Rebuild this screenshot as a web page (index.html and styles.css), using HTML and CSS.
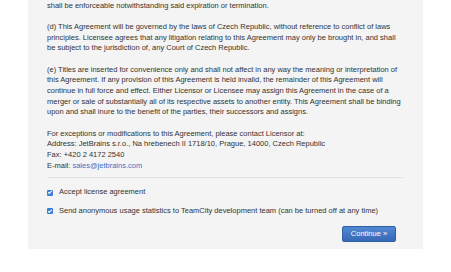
FILE: index.html
```html
<!DOCTYPE html>
<html lang="en">
  <head>
    <meta charset="UTF-8" />
    <title>TeamCity License Agreement</title>
    <link rel="stylesheet" href="styles.css">
  </head>
  <body>
    <main class="panel">
      <div class="agreement">
        <p>shall be enforceable notwithstanding said expiration or termination.</p>
        <p>
          (d) This Agreement will be governed by the laws of Czech Republic, without reference to conflict of laws
          principles. Licensee agrees that any litigation relating to this Agreement may only be brought in, and shall
          be subject to the jurisdiction of, any Court of Czech Republic.
        </p>
        <p>
          (e) Titles are inserted for convenience only and shall not affect in any way the meaning or interpretation of
          this Agreement. If any provision of this Agreement is held invalid, the remainder of this Agreement will
          continue in full force and effect. Either Licensor or Licensee may assign this Agreement in the case of a
          merger or sale of substantially all of its respective assets to another entity. This Agreement shall be binding
          upon and shall inure to the benefit of the parties, their successors and assigns.
        </p>
        <p>
          For exceptions or modifications to this Agreement, please contact Licensor at:<br />
          Address: JetBrains s.r.o., Na hrebenech II 1718/10, Prague, 14000, Czech Republic<br />
          Fax: +420 2 4172 2540<br />
          E-mail: <a href="mailto:sales@jetbrains.com">sales@jetbrains.com</a>
        </p>
      </div>

      <hr />

      <form class="accept">
        <label class="check">
          <input type="checkbox" checked />
          <span>Accept license agreement</span>
        </label>
        <label class="check">
          <input type="checkbox" checked />
          <span>Send anonymous usage statistics to TeamCity development team (can be turned off at any time)</span>
        </label>
        <div class="actions">
          <button type="button">Continue &raquo;</button>
        </div>
      </form>
    </main>
  </body>
</html>
```

FILE: styles.css
```css
body {
  margin: 0;
  background: #fff;
  font-family: "Liberation Sans", Arial, sans-serif;
  font-size: 7.5px;
  line-height: 10.67px;
  color: #333;
}

.panel {
  width: 395px;
  margin: 0 auto;
  padding: 0 19px 7px 19px;
  box-sizing: border-box;
  background: #f4f4f4;
}

.agreement {
  padding-top: 0.5px;
}

.agreement p {
  margin: 0 0 10.67px;
}

.agreement p:last-child {
  margin-bottom: 0;
}

a {
  color: #3875c8;
  text-decoration: none;
}

hr {
  border: none;
  height: 1px;
  background: #e2e2e2;
  margin: 6px 1px 9px 0;
}

.accept {
  display: flex;
  flex-direction: column;
  gap: 8px;
}

.check {
  display: flex;
  align-items: center;
  gap: 6px;
}

.check input {
  appearance: none;
  width: 6px;
  height: 6px;
  margin: 0;
  border-radius: 1px;
  background: #3d7fd8;
  position: relative;
}

.check input::after {
  content: "";
  position: absolute;
  left: 1.8px;
  top: 0.6px;
  width: 1.4px;
  height: 3px;
  border: solid #fff;
  border-width: 0 1px 1px 0;
  transform: rotate(45deg);
}

.actions {
  display: flex;
  justify-content: flex-end;
  padding-right: 8px;
  margin-top: 1px;
}

button {
  font-family: inherit;
  font-size: 7.5px;
  color: #fff;
  height: 16px;
  width: 54px;
  padding: 0;
  border: 1px solid #2f5fa6;
  border-radius: 2px;
  background: linear-gradient(#5288d2, #3668b6);
}
```
